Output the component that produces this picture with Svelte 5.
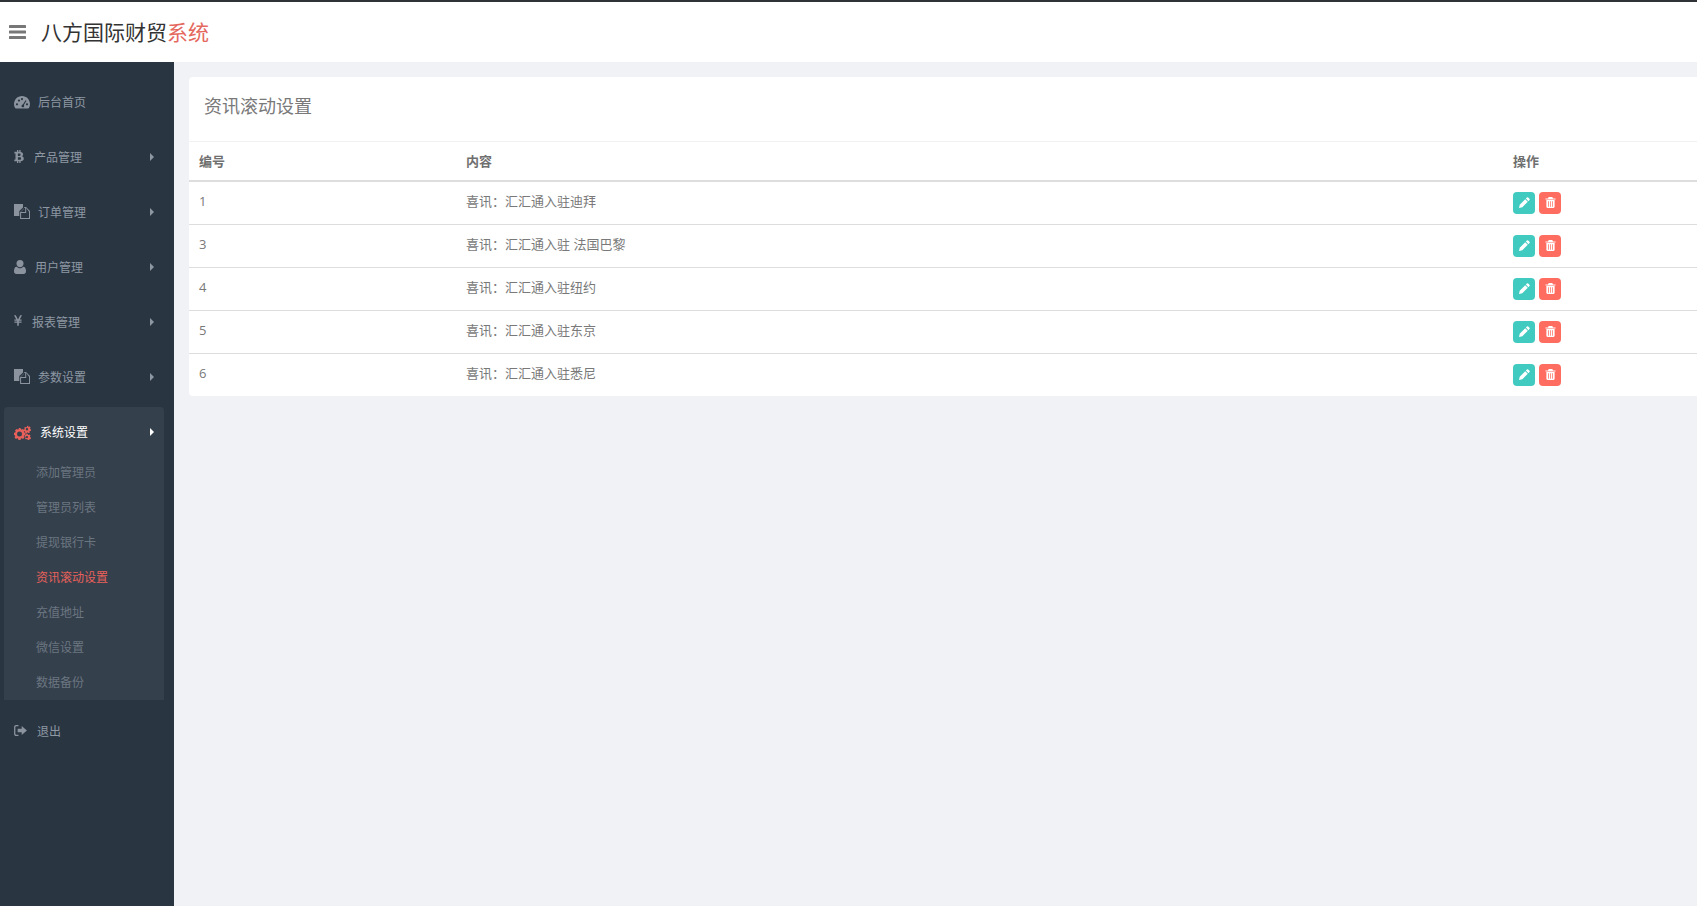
<script>
  const menu = [
    { label: '后台首页', icon: 'gauge' },
    { label: '产品管理', icon: 'btc', arrow: true },
    { label: '订单管理', icon: 'files', arrow: true },
    { label: '用户管理', icon: 'user', arrow: true },
    { label: '报表管理', icon: 'yen', arrow: true },
    { label: '参数设置', icon: 'files', arrow: true }
  ];
  const sub = ['添加管理员', '管理员列表', '提现银行卡', '资讯滚动设置', '充值地址', '微信设置', '数据备份'];
  const rows = [
    { id: 1, text: '喜讯\uFF1A汇汇通入驻迪拜' },
    { id: 3, text: '喜讯\uFF1A汇汇通入驻 法国巴黎' },
    { id: 4, text: '喜讯\uFF1A汇汇通入驻纽约' },
    { id: 5, text: '喜讯\uFF1A汇汇通入驻东京' },
    { id: 6, text: '喜讯\uFF1A汇汇通入驻悉尼' }
  ];
</script>

{#snippet icon(name)}
  {#if name === 'gauge'}
    <svg class="ic i-gauge" viewBox="0 0 16 14"><path fill-rule="evenodd" d="M8 1C3.6 1 0 4.600 0 9c0 1.500.4 2.900 1.100 4 .2.300.5.400.8.400h12.200c.3 0 .6-.1.800-.4.700-1.100 1.100-2.500 1.100-4 0-4.400-3.600-8-8-8ZM3 8.200a1.100 1.100 0 1 1 0 2.200 1.100 1.100 0 0 1 0-2.200Zm2-3.700a1.100 1.100 0 1 1 0 2.200 1.100 1.100 0 0 1 0-2.200ZM8 3a1.100 1.100 0 1 1 0 2.200A1.100 1.100 0 0 1 8 3Zm3.600 2.300.9.500-2.600 4.300c.3.400.4.800.2 1.300-.3.700-1 1-1.700.8-.7-.3-1-1-.8-1.700.2-.6.700-.9 1.300-.9l2.700-4.300Zm1.400 2.900a1.100 1.100 0 1 1 0 2.200 1.100 1.100 0 0 1 0-2.200Z"/></svg>
  {:else if name === 'btc'}
    <svg class="ic i-btc" viewBox="0 0 10 14"><path fill-rule="evenodd" d="M3 0h1.300v1.800h1V0h1.300v1.900c1.500.2 2.500 1 2.500 2.400 0 .9-.5 1.600-1.200 1.900 1.100.3 1.900 1.100 1.900 2.300 0 1.700-1.300 2.700-3.200 2.800V13H5.300v-1.800h-1V13H3v-1.800H.2l.3-1.700h1V3.400H.4V1.800H3V0Zm.9 3.500v2.400h1.500c.7 0 1.200-.5 1.200-1.200s-.5-1.200-1.200-1.200H3.900Zm0 3.800v2.500h1.900c.8 0 1.300-.5 1.300-1.300s-.5-1.200-1.300-1.200H3.900Z"/></svg>
  {:else if name === 'files'}
    <svg class="ic i-files" viewBox="0 0 16 15"><path d="M0 0h9v3.400L5.300 7v5H0V0Z"/><path fill-rule="evenodd" d="M10 3.700h1.200V8H6.800L10 4.800V3.700Zm-3.900 4.500L10 4.300V3h2l4 4v8H6.100V8.200Zm1 .9v4.900h7.900V7.800L12.200 4.100V9H7.100Z"/></svg>
  {:else if name === 'user'}
    <svg class="ic i-user" viewBox="0 0 12 14"><path d="M6 0a3.500 3.500 0 0 1 3.500 3.500C9.500 5.600 8 7.200 6 7.200S2.500 5.600 2.500 3.500A3.500 3.500 0 0 1 6 0Z"/><path d="M2.700 6.700C3.500 7.600 4.700 8.200 6 8.200s2.500-.6 3.300-1.500c1.800.1 2.700 1.800 2.700 4.600 0 1.700-1 2.700-2.400 2.700H2.400C1 14 0 13 0 11.300c0-2.800.9-4.500 2.700-4.600Z"/></svg>
  {:else if name === 'yen'}
    <svg class="ic i-yen" viewBox="0 0 9 12"><path d="M0 0h2l2.500 5L7 0h2L6.400 5H8.500v1.200H5.400v1h3.100v1.200H5.400V12H3.600V8.400H.5V7.200h3.100v-1H.5V5h2.100L0 0Z"/></svg>
  {:else if name === 'cogs'}
    <svg class="ic i-cogs" viewBox="0 0 17 14"><path fill-rule="evenodd" d="M4.400 2.400h2.200l.3 1.300 1 .4 1.100-.7 1.500 1.500-.7 1.100.4 1 1.300.3v2.200l-1.300.3-.4 1 .7 1.100-1.500 1.500-1.100-.7-1 .4-.3 1.300H4.400l-.3-1.300-1-.4-1.100.7L.5 11.900l.7-1.100-.4-1L0 9.500V7.300l1.300-.3.4-1-.7-1.100L2.500 3.400l1.100.7 1-.4.300-1.300Zm1.100 3.500a2.500 2.500 0 1 0 0 5 2.500 2.500 0 0 0 0-5Z"/><path fill-rule="evenodd" d="M13.600 0l.4 1 .8.300 1-.4.800 1-.6.900.2.800 1 .4-.2 1.300-1 .1-.5.700.3 1-1.100.6-.8-.7-.8.100-.7.800-1.200-.5.100-1-.6-.6-1-.1-.2-1.300.9-.4.300-.8-.5-.9.9-.9.900.5.800-.3.300-1h1.500ZM13 2.500a1.200 1.200 0 1 0 0 2.400 1.200 1.200 0 0 0 0-2.400Z"/><path fill-rule="evenodd" d="M13.600 8.300l.4.900.8.300.9-.4.800 1-.6.800.2.800 1 .400-.2 1.200-1 .1-.5.700-.4.800-1.200-.1-.3-1-.7-.3-.9.400-.8-1 .6-.8-.2-.8-1-.4.200-1.200 1-.1.500-.7.300-.9 1.100.3ZM13 10.500a1.100 1.100 0 1 0 0 2.200 1.100 1.100 0 0 0 0-2.200Z"/></svg>
  {:else if name === 'out'}
    <svg class="ic i-out" viewBox="0 0 14 12"><path d="M4.800 0v1.400H2.400c-.6 0-1 .4-1 1v7.200c0 .6.400 1 1 1h2.400V12H2.300C1 12 0 11 0 9.700V2.300C0 1 1 0 2.300 0h2.500Z"/><path d="M8.300 1 14 6l-5.700 5V8H3.900V4h4.400V1Z"/></svg>
  {/if}
{/snippet}

<div class="page">
  <header class="topbar">
    <svg class="burger" viewBox="0 0 17 14"><rect width="17" height="3" rx=".6"/><rect y="5.500" width="17" height="3" rx=".6"/><rect y="11" width="17" height="3" rx=".6"/></svg>
    <h1 class="brand">八方国际财贸<span>系统</span></h1>
  </header>

  <div class="body">
    <aside class="side">
      <nav class="nav">
        {#each menu as m}
          <a class="item" href="#top">
            {@render icon(m.icon)}
            <span>{m.label}</span>
            {#if m.arrow}<i class="arrow"></i>{/if}
          </a>
        {/each}
        <div class="group">
          <a class="item open" href="#top">
            {@render icon('cogs')}
            <span>系统设置</span>
            <i class="arrow"></i>
          </a>
          <ul class="sub">
            {#each sub as s, i}
              <li class:active={i === 3}>{s}</li>
            {/each}
          </ul>
        </div>
        <a class="item out" href="#top">
          {@render icon('out')}
          <span>退出</span>
        </a>
      </nav>
    </aside>

    <main class="main">
      <section class="panel">
        <h2 class="title">资讯滚动设置</h2>
        <table>
          <thead>
            <tr><th class="c1">编号</th><th class="c2">内容</th><th>操作</th></tr>
          </thead>
          <tbody>
            {#each rows as r}
              <tr>
                <td>{r.id}</td>
                <td>{r.text}</td>
                <td>
                  <div class="acts">
                    <button class="btn edit" aria-label="编辑">
                      <svg viewBox="0 0 12 12"><path d="M8.600.6a1 1 0 0 1 1.400 0l1.400 1.400a1 1 0 0 1 0 1.400L10.300 4.500 7.500 1.700 8.600.6ZM6.800 2.400l2.800 2.800-6 6L0 12l.8-3.600 6-6Z"/></svg>
                    </button>
                    <button class="btn del" aria-label="删除">
                      <svg viewBox="0 0 11 12"><path fill-rule="evenodd" d="M3.500 0h4l.7 1.500H11v1.100H0V1.500h2.800L3.500 0ZM1 3.300h9v7.400c0 .7-.6 1.300-1.300 1.300H2.300C1.600 12 1 11.400 1 10.700V3.300Zm2 1.200v6h.8v-6H3Zm2.100 0v6h.8v-6h-.8Zm2.100 0v6H8v-6h-.8Z"/></svg>
                    </button>
                  </div>
                </td>
              </tr>
            {/each}
          </tbody>
        </table>
      </section>
    </main>
  </div>
</div>

<style>
  :global(body) {
    margin: 0;
    background: #f0f2f6;
    overflow: hidden;
  }
  .page {
    width: 1697px;
    height: 906px;
    display: flex;
    flex-direction: column;
    font-family: "Open Sans", "Noto Sans CJK SC", sans-serif;
  }
  .topbar {
    height: 60px;
    flex: none;
    box-sizing: content-box;
    border-top: 2px solid #2f3338;
    background: #fff;
    display: flex;
    align-items: center;
    padding-left: 9px;
    gap: 15px;
  }
  .burger { width: 17px; height: 14px; fill: #777; }
  .brand {
    margin: 0;
    font-size: 21px;
    font-weight: 400;
    color: #333;
    line-height: 1;
  }
  .brand span { color: #e5685f; }
  .body { flex: 1; display: flex; min-height: 0; }
  .side {
    width: 174px;
    flex: none;
    background: #2a3542;
    padding: 12px 10px 0 4px;
    box-sizing: border-box;
  }
  .nav { display: flex; flex-direction: column; }
  .item {
    height: 55px;
    box-sizing: border-box;
    flex: none;
    display: flex;
    align-items: center;
    padding-left: 10px;
    font-size: 12px;
    color: #8d98a3;
    text-decoration: none;
    position: relative;
  }
  .ic { fill: #8a939e; flex: none; }
  .i-gauge { width: 16px; height: 14px; margin-right: 8px; }
  .i-btc { width: 10px; height: 14px; margin-right: 10px; }
  .i-files { width: 16px; height: 15px; margin-right: 8px; }
  .i-user { width: 12px; height: 14px; margin-right: 9px; }
  .i-yen { width: 8px; height: 11px; margin: -3px 10px 0 0; }
  .i-cogs { width: 17px; height: 15px; margin-right: 9px; fill: #e9605a; }
  .i-out { width: 13px; height: 11px; margin-right: 10px; }
  .arrow {
    position: absolute;
    left: 146px;
    top: 50%;
    margin-top: -4px;
    border-left: 4px solid #8d98a3;
    border-top: 4px solid transparent;
    border-bottom: 4px solid transparent;
  }
  .group {
    background: #35404d;
    border-radius: 4px 4px 0 0;
    height: 293px;
    margin-top: 3px;
  }
  .item.open { color: #fff; height: 50px; }
  .item.open .arrow { border-left-color: #fff; }
  .sub {
    list-style: none;
    margin: -2px 0 0;
    padding: 0 0 0 32px;
  }
  .sub li {
    height: 35px;
    line-height: 35px;
    font-size: 12px;
    color: #6b7680;
  }
  .sub li.active { color: #e9605a; }
  .out { margin-top: 3px; }
  .main { flex: 1; padding: 15px 0 0 15px; min-width: 0; }
  .panel {
    background: #fff;
    border-radius: 4px 0 0 4px;
  }
  .title {
    margin: 0;
    height: 65px;
    box-sizing: border-box;
    border-bottom: 1px solid #f2f2f2;
    padding: 0 0 4px 15px;
    line-height: 58px;
    font-size: 18px;
    font-weight: 400;
    color: #797979;
  }
  table {
    width: 100%;
    border-collapse: collapse;
    table-layout: fixed;
    font-size: 13px;
    color: #797979;
  }
  th {
    height: 39px;
    padding: 0 0 2px 10px;
    box-sizing: border-box;
    text-align: left;
    font-weight: 700;
    color: #6f6f6f;
    border-bottom: 2px solid #ddd;
  }
  .c1 { width: 267px; }
  .c2 { width: 1047px; }
  td {
    height: 43px;
    padding: 0 0 4px 10px;
    box-sizing: border-box;
    border-top: 1px solid #ddd;
    vertical-align: middle;
  }
  tbody tr:first-child td { border-top: 0; }
  .acts { display: flex; gap: 4px; padding-top: 4px; }
  .btn {
    width: 22px;
    height: 22px;
    padding: 0;
    border: 0;
    border-radius: 4px;
    display: flex;
    align-items: center;
    justify-content: center;
  }
  .btn svg { width: 11px; height: 11px; fill: #fff; }
  .edit { background: #41cac0; }
  .del { background: #ff6c60; }
</style>
